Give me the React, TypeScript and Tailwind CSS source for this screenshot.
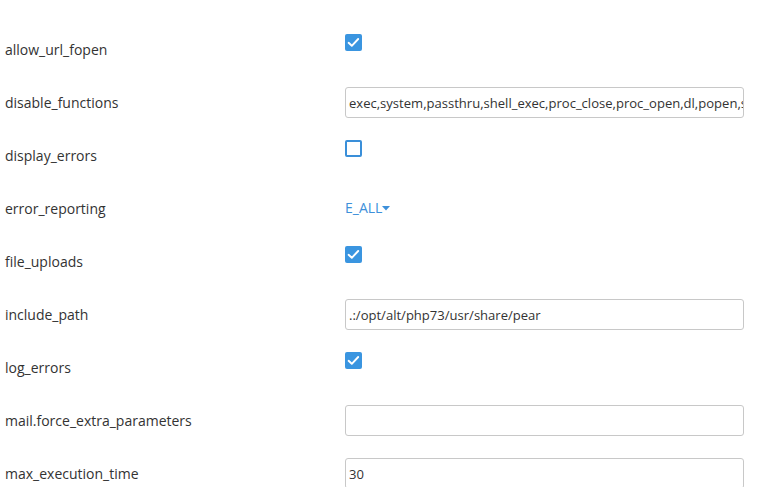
import React from "react";

type Row =
  | { label: string; kind: "check"; checked: boolean }
  | { label: string; kind: "text"; value: string }
  | { label: string; kind: "select"; value: string };

const rows: Row[] = [
  { label: "allow_url_fopen", kind: "check", checked: true },
  {
    label: "disable_functions",
    kind: "text",
    value:
      "exec,system,passthru,shell_exec,proc_close,proc_open,dl,popen,show_source,posix_kill",
  },
  { label: "display_errors", kind: "check", checked: false },
  { label: "error_reporting", kind: "select", value: "E_ALL" },
  { label: "file_uploads", kind: "check", checked: true },
  { label: "include_path", kind: "text", value: ".:/opt/alt/php73/usr/share/pear" },
  { label: "log_errors", kind: "check", checked: true },
  { label: "mail.force_extra_parameters", kind: "text", value: "" },
  { label: "max_execution_time", kind: "text", value: "30" },
];

function Check({ checked }: { checked: boolean }) {
  if (checked) {
    return (
      <div className="w-[17px] h-[17px] rounded-[2px] bg-[#3a95e0] flex items-center justify-center">
        <svg width="17" height="17" viewBox="0 0 17 17" fill="none">
          <path d="M3.6 8.8 L6.8 11.8 L13.2 5" stroke="white" strokeWidth="1.9" strokeLinecap="round" strokeLinejoin="round" />
        </svg>
      </div>
    );
  }
  return <div className="w-[17px] h-[17px] rounded-[2px] border-2 border-[#3a8fd9] bg-white" />;
}

export default function App() {
  return (
    <div
      className="w-[769px] h-[487px] overflow-hidden bg-white pt-[34px] text-[#333333]"
      style={{ fontFamily: '"Open Sans", "Noto Sans", sans-serif' }}
    >
      {rows.map((r) => (
        <div key={r.label} className="flex h-[53px] items-start">
          <div className="w-[345px] pl-[5px] pt-[6px] text-[14px] leading-[20px]">{r.label}</div>
          <div className="w-[399px]">
            {r.kind === "check" && <Check checked={r.checked} />}
            {r.kind === "text" && (
              <input
                readOnly
                value={r.value}
                className="w-[399px] h-[31px] border border-[#c8c8c8] rounded-[3px] pl-[3px] pr-0 text-[13.05px] text-[#333333] outline-none bg-white"
                style={{ fontFamily: '"Open Sans", "Noto Sans", sans-serif' }}
              />
            )}
            {r.kind === "select" && (
              <div className="flex items-center pt-[5px] text-[14px] leading-[20px] text-[#3d90da]">
                <span>{r.value}</span>
                <svg width="8" height="5" viewBox="0 0 8 5" className="mt-[1px]">
                  <path d="M0 0 L8 0 L4 4.5 Z" fill="#3d90da" />
                </svg>
              </div>
            )}
          </div>
        </div>
      ))}
    </div>
  );
}
